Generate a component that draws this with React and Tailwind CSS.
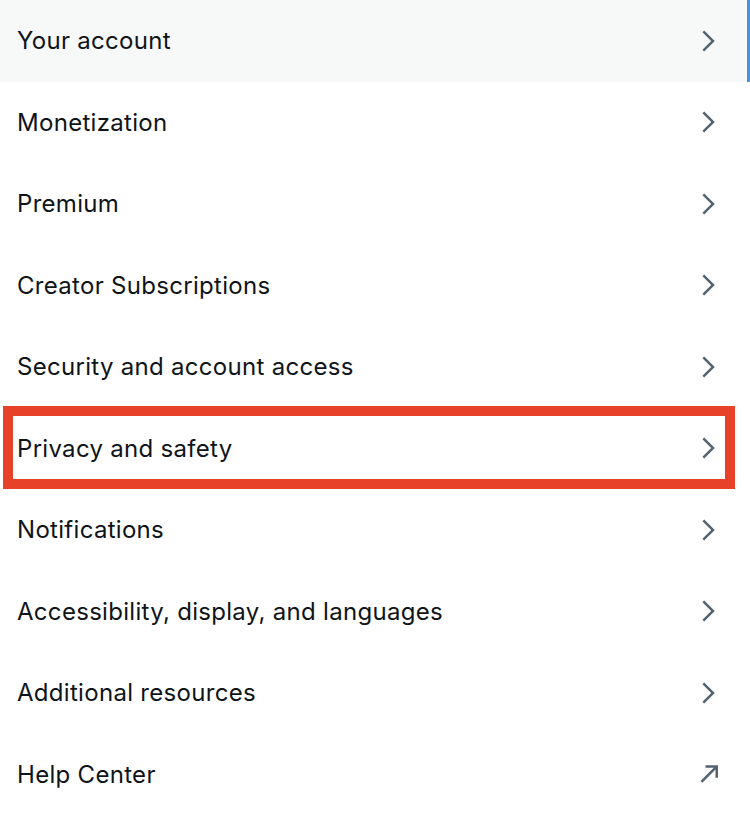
import React from "react";

const items = [
  "Your account",
  "Monetization",
  "Premium",
  "Creator Subscriptions",
  "Security and account access",
  "Privacy and safety",
  "Notifications",
  "Accessibility, display, and languages",
  "Additional resources",
  "Help Center",
];

function Chevron() {
  return (
    <svg viewBox="0 0 24 24" className="w-[30px] h-[30px] fill-[#536471]">
      <path d="M14.586 12L7.543 4.96l1.414-1.42L17.414 12l-8.457 8.46-1.414-1.42L14.586 12z" />
    </svg>
  );
}

function External() {
  return (
    <svg viewBox="0 0 24 24" className="w-[30px] h-[30px] fill-[#536471]">
      <path d="M6 17.59L16.59 7H10V5h10v10h-2V8.41L7.41 19 6 17.59z" />
    </svg>
  );
}

export default function App() {
  return (
    <div
      className="w-[750px] h-[840px] bg-white overflow-hidden"
      style={{ fontFamily: "Inter, 'Noto Sans', sans-serif" }}
    >
      {items.map((label, i) => (
        <div
          key={label}
          className={
            "relative flex items-center justify-between h-[81.5px] pl-[17px] pr-[27px] " +
            (i === 0 ? "bg-[#f7f9f9]" : "bg-white")
          }
        >
          <span className="text-[24px] text-[#0f1419] tracking-[0.3px] pt-[1px]">{label}</span>
          {i === items.length - 1 ? <External /> : <Chevron />}
          {i === 0 && (
            <div className="absolute right-0 top-0 h-full w-[3px] bg-[#4a90e2]" />
          )}
          {i === 5 && (
            <div className="absolute left-[3px] top-[-1.5px] w-[732px] h-[83px] border-[10px] border-[#e8412a]" />
          )}
        </div>
      ))}
    </div>
  );
}
